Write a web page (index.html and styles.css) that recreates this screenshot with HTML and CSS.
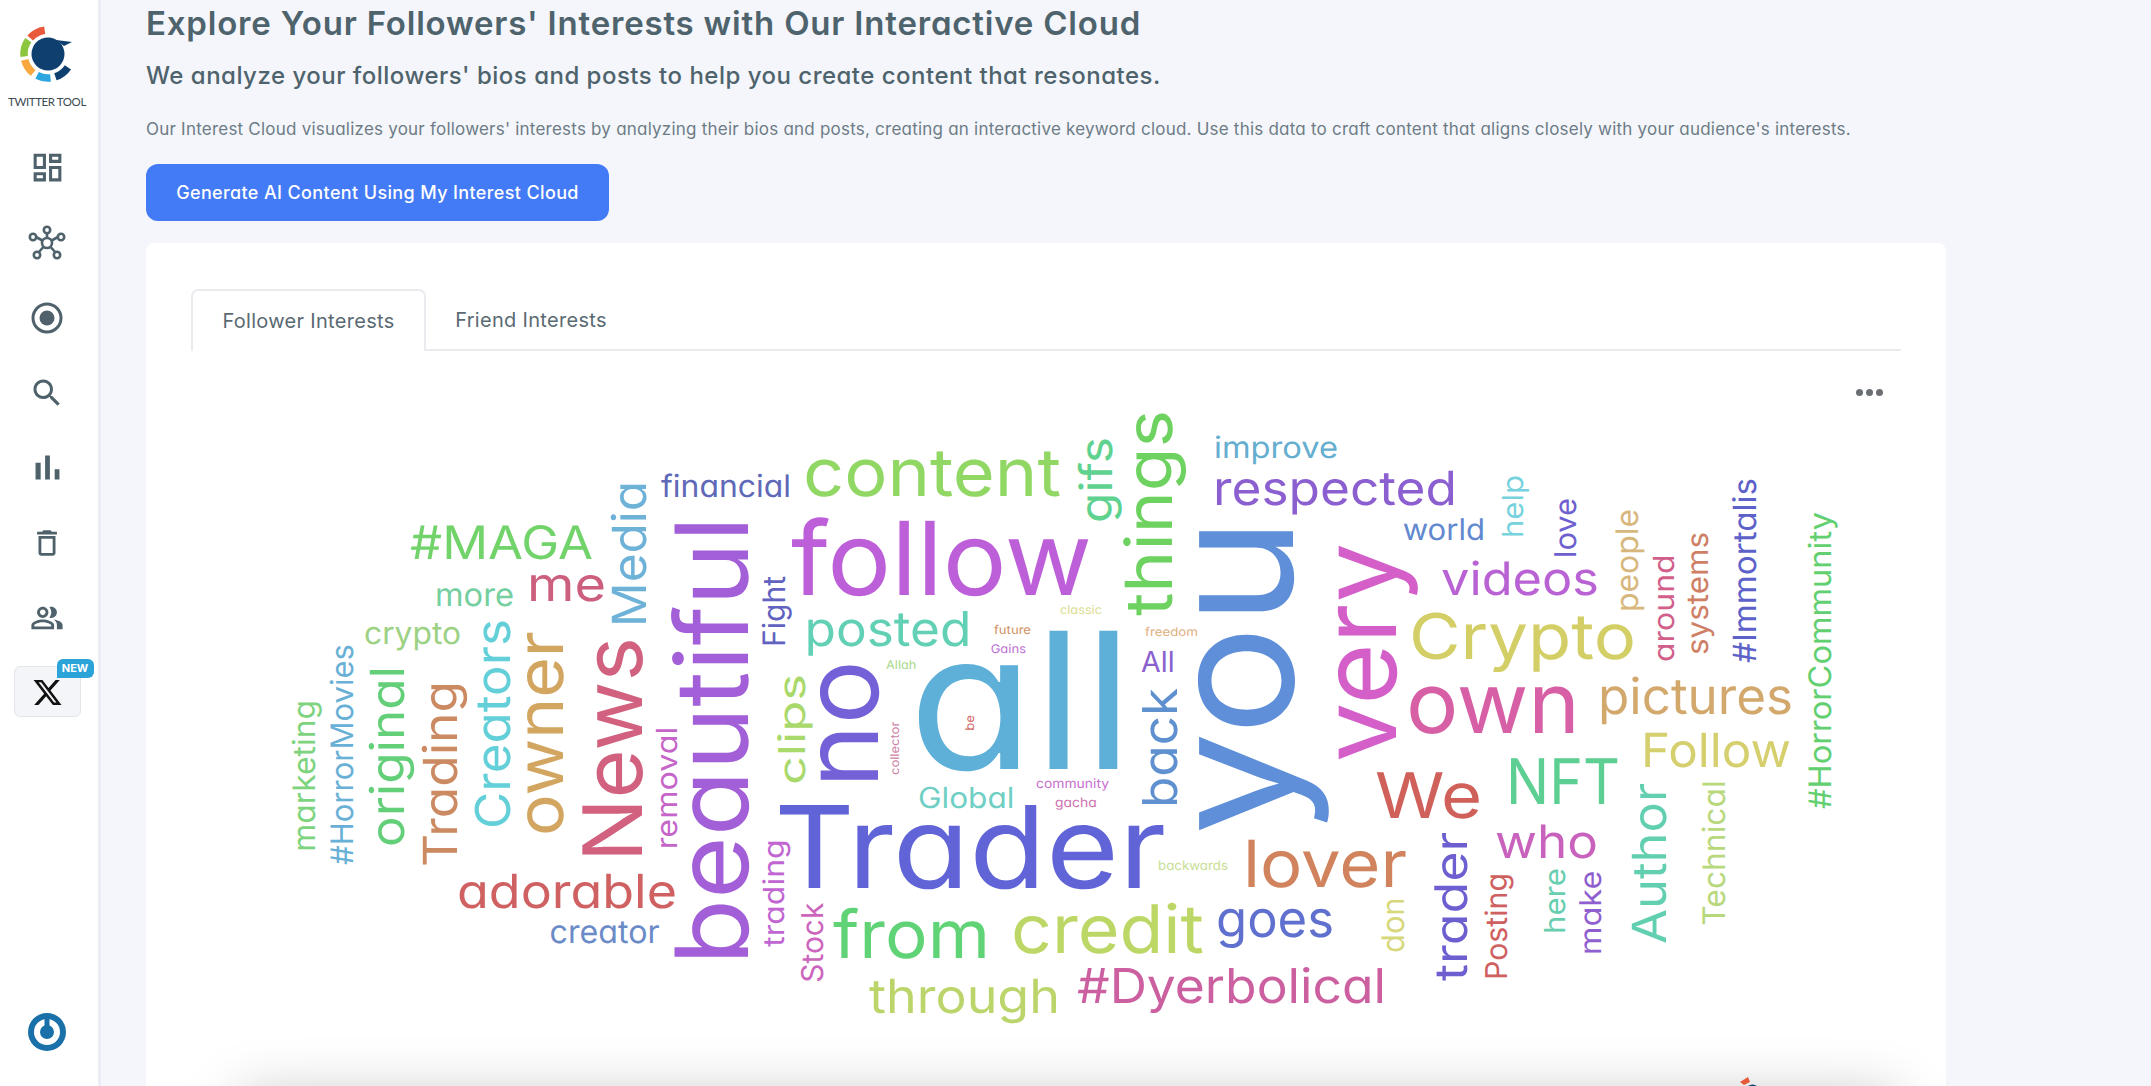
FILE: index.html
```html
<!DOCTYPE html>
<html lang="en">
<head>
<meta charset="utf-8">
<title>Interest Cloud</title>
<link rel="stylesheet" href="styles.css">
</head>
<body>
<div class="app">
  <aside class="sidebar">
    <div class="brand">
      <svg class="brand-mark" viewBox="0 0 68 68" width="68" height="68">
        <g fill="none" stroke-width="7.5">
          <path stroke="#e8583a" d="M16.2 17.9A24 24 0 0 1 30.7 10.2"/>
          <path stroke="#8cc63f" d="M10.1 36.5A24 24 0 0 1 14.3 20.2"/>
          <path stroke="#f9a83f" d="M19.2 52.9A24 24 0 0 1 10.7 39.8"/>
          <path stroke="#2aa5e0" d="M36.5 57.9A24 24 0 0 1 23.1 55.4"/>
          <path stroke="#0f3f6e" d="M53.9 47.4A24 24 0 0 1 41.4 56.8"/>
        </g>
        <path fill="#0f3f6e" d="M42 20l16 2-8 4z"/>
        <circle cx="34" cy="34" r="16.5" fill="#0f3f6e"/>
      </svg>
      <div class="brand-name">TWITTER TOOL</div>
    </div>
    <nav class="nav">
      <a class="nav-item"><svg viewBox="0 0 24 24" width="37" height="37"><path d="M19 5v2h-4V5h4M9 5v6H5V5h4m10 8v6h-4v-6h4M9 17v2H5v-2h4M21 3h-8v6h8V3zM11 3H3v10h8V3zm10 8h-8v10h8V11zm-10 4H3v6h8v-6z"/></svg></a>
      <a class="nav-item"><svg class="hub" viewBox="0 0 38 36" width="38" height="36"><g class="hub-lines"><path d="M19 18V8M19 18L8 12M19 18L30 12M19 18L10 28M19 18L28 28"/></g><circle cx="19" cy="18" r="5"/><circle cx="19" cy="5" r="3.2"/><circle cx="5" cy="12" r="3.2"/><circle cx="33" cy="12" r="3.2"/><circle cx="9" cy="30" r="3.2"/><circle cx="29" cy="30" r="3.2"/></svg></a>
      <a class="nav-item"><svg viewBox="0 0 32 32" width="32" height="32"><circle class="ring" cx="16" cy="16" r="14"/><circle cx="16" cy="16" r="7.5"/></svg></a>
      <a class="nav-item"><svg viewBox="0 0 24 24" width="36" height="36"><path d="M15.5 14h-.79l-.28-.27C15.41 12.59 16 11.11 16 9.5 16 5.91 13.09 3 9.5 3S3 5.91 3 9.5 5.91 16 9.5 16c1.61 0 3.09-.59 4.23-1.57l.27.28v.79l5 4.99L20.49 19l-4.99-5zm-6 0C7.01 14 5 11.99 5 9.5S7.01 5 9.5 5 14 7.01 14 9.5 11.99 14 9.5 14z"/></svg></a>
      <a class="nav-item"><svg viewBox="0 0 24 24" width="41" height="41"><path d="M5 9.2h3V19H5zM10.6 5h2.8v14h-2.8zm5.6 8H19v6h-2.8z"/></svg></a>
      <a class="nav-item"><svg viewBox="0 0 24 24" width="34" height="34"><path d="M6 19c0 1.1.9 2 2 2h8c1.1 0 2-.9 2-2V7H6v12zM8 9h8v10H8V9zm7.5-5l-1-1h-5l-1 1H5v2h14V4z"/></svg></a>
      <a class="nav-item"><svg viewBox="0 0 24 24" width="34" height="34"><path d="M16.67 13.13C18.04 14.06 19 15.32 19 17v3h4v-3c0-2.18-3.57-3.47-6.33-3.87zM15 12c2.21 0 4-1.79 4-4s-1.79-4-4-4c-.47 0-.91.1-1.33.24C14.5 5.27 15 6.58 15 8s-.5 2.73-1.33 3.76c.42.14.86.24 1.33.24zM9 12c2.21 0 4-1.79 4-4s-1.79-4-4-4-4 1.79-4 4 1.79 4 4 4zm0-6c1.1 0 2 .9 2 2s-.9 2-2 2-2-.9-2-2 .9-2 2-2zM9 13c-2.67 0-8 1.34-8 4v3h16v-3c0-2.66-5.33-4-8-4zm6 5H3v-.99C3.2 16.29 6.3 15 9 15s5.8 1.29 6 2v1z"/></svg></a>
      <a class="x-button">
        <svg viewBox="0 0 24 24" width="31" height="31"><path d="M18.244 2.25h3.308l-7.227 8.26 8.502 11.24H16.17l-5.214-6.817L4.99 21.75H1.68l7.73-8.835L1.254 2.25H8.08l4.713 6.231zm-1.161 17.52h1.833L7.084 4.126H5.117z"/></svg>
        <span class="badge">NEW</span>
      </a>
    </nav>
    <a class="power">
      <svg viewBox="0 0 38 38" width="38" height="38">
        <circle cx="19" cy="19" r="19" fill="#1a70a8"/>
        <circle cx="19" cy="19" r="10" fill="none" stroke="#fff" stroke-width="6"/>
        <path d="M19 6v13" stroke="#1a70a8" stroke-width="5" stroke-linecap="round" fill="none"/>
      </svg>
    </a>
  </aside>

  <main class="main">
    <h1 class="title">Explore Your Followers' Interests with Our Interactive Cloud</h1>
    <h2 class="subtitle">We analyze your followers' bios and posts to help you create content that resonates.</h2>
    <p class="intro">Our Interest Cloud visualizes your followers' interests by analyzing their bios and posts, creating an interactive keyword cloud. Use this data to craft content that aligns closely with your audience's interests.</p>
    <button class="cta">Generate AI Content Using My Interest Cloud</button>

    <section class="card">
      <div class="tabs">
        <button class="tab tab-active">Follower Interests</button>
        <button class="tab">Friend Interests</button>
      </div>
      <div class="chart">
        <div class="more-menu"><i></i><i></i><i></i></div>
        <svg class="cloud" viewBox="191 351 1710 700" width="1710" height="700">
          <text lengthAdjust="spacingAndGlyphs" x="908.5" y="769" font-size="190" textLength="224.5" fill="#5fb0d8">all</text>
          <text lengthAdjust="spacingAndGlyphs" x="791" y="595" font-size="102" textLength="301" fill="#bd5fd8">follow</text>
          <text lengthAdjust="spacingAndGlyphs" x="774" y="888" font-size="114" textLength="392" fill="#6064d6">Trader</text>
          <text lengthAdjust="spacingAndGlyphs" x="803" y="495.7" font-size="66" textLength="258" fill="#91d764">content</text>
          <text lengthAdjust="spacingAndGlyphs" x="804.5" y="646" font-size="48" textLength="167" fill="#62d0b4">posted</text>
          <text lengthAdjust="spacingAndGlyphs" x="661" y="497" font-size="31" textLength="130" fill="#6068b8">financial</text>
          <text lengthAdjust="spacingAndGlyphs" x="410" y="559" font-size="46" textLength="183" fill="#71d36a">#MAGA</text>
          <text lengthAdjust="spacingAndGlyphs" x="527" y="601" font-size="47" textLength="79" fill="#cc5f7e">me</text>
          <text lengthAdjust="spacingAndGlyphs" x="435" y="606" font-size="32" textLength="79" fill="#75cf9f">more</text>
          <text lengthAdjust="spacingAndGlyphs" x="364" y="644" font-size="31" textLength="97" fill="#9dd184">crypto</text>
          <text lengthAdjust="spacingAndGlyphs" x="457" y="908" font-size="47" textLength="220" fill="#cf6162">adorable</text>
          <text lengthAdjust="spacingAndGlyphs" x="549.6" y="942.7" font-size="32" textLength="110" fill="#6b8bc8">creator</text>
          <text lengthAdjust="spacingAndGlyphs" x="833" y="958.3" font-size="66" textLength="157" fill="#5fd375">from</text>
          <text lengthAdjust="spacingAndGlyphs" x="869" y="1012.7" font-size="47" textLength="191" fill="#bcd56a">through</text>
          <text lengthAdjust="spacingAndGlyphs" x="1011" y="953.3" font-size="67" textLength="193" fill="#bdd766">credit</text>
          <text lengthAdjust="spacingAndGlyphs" x="1216" y="936.7" font-size="51" textLength="118" fill="#6070cf">goes</text>
          <text lengthAdjust="spacingAndGlyphs" x="1077" y="1003" font-size="48" textLength="309" fill="#cc5fa0">#Dyerbolical</text>
          <text lengthAdjust="spacingAndGlyphs" x="1243" y="886.7" font-size="65" textLength="164" fill="#d0835c">lover</text>
          <text lengthAdjust="spacingAndGlyphs" x="1158" y="870" font-size="13" textLength="70" fill="#c7de96">backwards</text>
          <text lengthAdjust="spacingAndGlyphs" x="1441" y="595" font-size="46" textLength="158" fill="#b962d4">videos</text>
          <text lengthAdjust="spacingAndGlyphs" x="1495" y="857.7" font-size="46" textLength="103" fill="#c962bd">who</text>
          <text lengthAdjust="spacingAndGlyphs" x="1641" y="766.5" font-size="47" textLength="150" fill="#d5cf6e">Follow</text>
          <text lengthAdjust="spacingAndGlyphs" x="1598" y="714" font-size="50" textLength="195" fill="#d2a86c">pictures</text>
          <text lengthAdjust="spacingAndGlyphs" x="1506" y="804.4" font-size="63" textLength="114" fill="#5dcf92">NFT</text>
          <text lengthAdjust="spacingAndGlyphs" x="1406" y="732.7" font-size="84" textLength="174" fill="#d75fa5">own</text>
          <text lengthAdjust="spacingAndGlyphs" x="1409" y="658.6" font-size="63" textLength="227" fill="#d3cf66">Crypto</text>
          <text lengthAdjust="spacingAndGlyphs" x="1402.7" y="540" font-size="30" textLength="82.3" fill="#6288cf">world</text>
          <text lengthAdjust="spacingAndGlyphs" x="1214" y="458" font-size="30" textLength="124" fill="#65aed0">improve</text>
          <text lengthAdjust="spacingAndGlyphs" x="1213" y="505" font-size="47" textLength="244" fill="#8c5fd0">respected</text>
          <text lengthAdjust="spacingAndGlyphs" x="1141" y="671.7" font-size="29" textLength="33.6" fill="#8a60cf">All</text>
          <text lengthAdjust="spacingAndGlyphs" x="1375" y="818" font-size="63" textLength="107" fill="#d0605a">We</text>
          <text lengthAdjust="spacingAndGlyphs" x="918" y="808" font-size="29" textLength="96.4" fill="#6fcfc4">Global</text>
          <text lengthAdjust="spacingAndGlyphs" x="1036" y="788" font-size="13" textLength="73" fill="#c670cf">community</text>
          <text lengthAdjust="spacingAndGlyphs" x="1055" y="806.7" font-size="13" textLength="41.7" fill="#cf6fae">gacha</text>
          <text lengthAdjust="spacingAndGlyphs" x="1060" y="614" font-size="12" textLength="42" fill="#dcdc90">classic</text>
          <text lengthAdjust="spacingAndGlyphs" x="994" y="634" font-size="12" textLength="37" fill="#d09060">future</text>
          <text lengthAdjust="spacingAndGlyphs" x="990.7" y="652.7" font-size="12" textLength="35.3" fill="#bd70d0">Gains</text>
          <text lengthAdjust="spacingAndGlyphs" x="886" y="669" font-size="12" textLength="30.4" fill="#a8d88a">Allah</text>
          <text lengthAdjust="spacingAndGlyphs" x="1145" y="636" font-size="12" textLength="53" fill="#e0b080">freedom</text>

          <text lengthAdjust="spacingAndGlyphs" transform="rotate(-90 645.6 627)" x="645.6" y="627" font-size="47" textLength="146" fill="#6eb2d8">Media</text>
          <text lengthAdjust="spacingAndGlyphs" transform="rotate(-90 747.7 965)" x="747.7" y="965" font-size="101" textLength="449" fill="#a25fd8">beautiful</text>
          <text lengthAdjust="spacingAndGlyphs" transform="rotate(-90 785 647)" x="785" y="647" font-size="31" textLength="71" fill="#6262c0">Fight</text>
          <text lengthAdjust="spacingAndGlyphs" transform="rotate(-90 804.6 785)" x="804.6" y="785" font-size="37" textLength="111" fill="#a9d96a">clips</text>
          <text lengthAdjust="spacingAndGlyphs" transform="rotate(-90 877.7 788)" x="877.7" y="788" font-size="105" textLength="128" fill="#7461d8">no</text>
          <text lengthAdjust="spacingAndGlyphs" transform="rotate(-90 562.6 836)" x="562.6" y="836" font-size="65" textLength="205" fill="#d2a660">owner</text>
          <text lengthAdjust="spacingAndGlyphs" transform="rotate(-90 641.7 862)" x="641.7" y="862" font-size="82" textLength="225" fill="#d1617f">News</text>
          <text lengthAdjust="spacingAndGlyphs" transform="rotate(-90 510.4 829)" x="510.4" y="829" font-size="48" textLength="210" fill="#63cfd8">Creators</text>
          <text lengthAdjust="spacingAndGlyphs" transform="rotate(-90 456.6 867)" x="456.6" y="867" font-size="47" textLength="186" fill="#cc8a63">Trading</text>
          <text lengthAdjust="spacingAndGlyphs" transform="rotate(-90 404.4 847)" x="404.4" y="847" font-size="47" textLength="181" fill="#64cf79">original</text>
          <text lengthAdjust="spacingAndGlyphs" transform="rotate(-90 353 865)" x="353" y="865" font-size="31" textLength="221" fill="#69b0d6">#HorrorMovies</text>
          <text lengthAdjust="spacingAndGlyphs" transform="rotate(-90 315.5 851.7)" x="315.5" y="851.7" font-size="31" textLength="151.7" fill="#7dd37e">marketing</text>
          <text lengthAdjust="spacingAndGlyphs" transform="rotate(-90 677 849.3)" x="677" y="849.3" font-size="29" textLength="122.6" fill="#c565c9">removal</text>
          <text lengthAdjust="spacingAndGlyphs" transform="rotate(-90 784 946.7)" x="784" y="946.7" font-size="29" textLength="107.4" fill="#c065d2">trading</text>
          <text lengthAdjust="spacingAndGlyphs" transform="rotate(-90 822.8 982.7)" x="822.8" y="982.7" font-size="30" textLength="80" fill="#cc66bd">Stock</text>
          <text lengthAdjust="spacingAndGlyphs" transform="rotate(-90 1404 953)" x="1404" y="953" font-size="31" textLength="55.6" fill="#d7d77c">don</text>
          <text lengthAdjust="spacingAndGlyphs" transform="rotate(-90 1467 981)" x="1467" y="981" font-size="45" textLength="149" fill="#6d5fd0">trader</text>
          <text lengthAdjust="spacingAndGlyphs" transform="rotate(-90 1506.7 980)" x="1506.7" y="980" font-size="30" textLength="107" fill="#cf6060">Posting</text>
          <text lengthAdjust="spacingAndGlyphs" transform="rotate(-90 1523 538)" x="1523" y="538" font-size="29" textLength="63" fill="#76d2dc">help</text>
          <text lengthAdjust="spacingAndGlyphs" transform="rotate(-90 1576 558)" x="1576" y="558" font-size="30" textLength="60" fill="#6e60cf">love</text>
          <text lengthAdjust="spacingAndGlyphs" transform="rotate(-90 1638 612)" x="1638" y="612" font-size="31" textLength="103" fill="#d7b77c">people</text>
          <text lengthAdjust="spacingAndGlyphs" transform="rotate(-90 1674 662)" x="1674" y="662" font-size="29" textLength="107.6" fill="#d15f8a">around</text>
          <text lengthAdjust="spacingAndGlyphs" transform="rotate(-90 1708 655)" x="1708" y="655" font-size="30" textLength="123" fill="#ce7f65">systems</text>
          <text lengthAdjust="spacingAndGlyphs" transform="rotate(-90 1755.7 663)" x="1755.7" y="663" font-size="32" textLength="185" fill="#5d62c8">#Immortalis</text>
          <text lengthAdjust="spacingAndGlyphs" transform="rotate(-90 1830.7 809)" x="1830.7" y="809" font-size="31" textLength="297" fill="#62cf70">#HorrorCommunity</text>
          <text lengthAdjust="spacingAndGlyphs" transform="rotate(-90 1725 925.7)" x="1725" y="925.7" font-size="31" textLength="145.4" fill="#b8d87c">Technical</text>
          <text lengthAdjust="spacingAndGlyphs" transform="rotate(-90 1665.7 944)" x="1665.7" y="944" font-size="47" textLength="161" fill="#62d0b0">Author</text>
          <text lengthAdjust="spacingAndGlyphs" transform="rotate(-90 1601 955)" x="1601" y="955" font-size="30" textLength="84.4" fill="#8f5fcf">make</text>
          <text lengthAdjust="spacingAndGlyphs" transform="rotate(-90 1565 934)" x="1565" y="934" font-size="29" textLength="66" fill="#68ceb0">here</text>
          <text lengthAdjust="spacingAndGlyphs" transform="rotate(-90 1112 523)" x="1112" y="523" font-size="45" textLength="86" fill="#5fd290">gifs</text>
          <text lengthAdjust="spacingAndGlyphs" transform="rotate(-90 1171.8 616)" x="1171.8" y="616" font-size="65" textLength="206" fill="#6dd25f">things</text>
          <text lengthAdjust="spacingAndGlyphs" transform="rotate(-90 1293 835)" x="1293" y="835" font-size="172" textLength="318" fill="#5f8fd8">you</text>
          <text lengthAdjust="spacingAndGlyphs" transform="rotate(-90 1396 762)" x="1396" y="762" font-size="105" textLength="219" fill="#d45fc8">very</text>
          <text lengthAdjust="spacingAndGlyphs" transform="rotate(-90 1177 808)" x="1177" y="808" font-size="48" textLength="120" fill="#5f90cf">back</text>
          <text lengthAdjust="spacingAndGlyphs" transform="rotate(-90 898.6 775)" x="898.6" y="775" font-size="12" textLength="53.3" fill="#cf7fa5">collector</text>
          <text lengthAdjust="spacingAndGlyphs" transform="rotate(-90 974 730.7)" x="974" y="730.7" font-size="12" textLength="15.7" fill="#cf6565">be</text>
        </svg>
      </div>
      <div class="next-panel">
        <svg class="next-mark" viewBox="0 0 20 12" width="20" height="12"><path fill="#e8583a" d="M0 5L8 0l2 5-6 3z"/><path fill="#0f3f6e" d="M8 9c3-2 6-2 9 0v3H8z"/></svg>
      </div>
    </section>
  </main>
</div>
</body>
</html>
```
FILE: styles.css
```css
* { box-sizing: border-box; }
html, body { margin: 0; height: 100%; }
body {
  background: #f4f6fb;
  font-family: "Inter", "Noto Sans", sans-serif;
  font-feature-settings: "cv11";
  color: #4f626b;
  overflow: hidden;
}
.app { display: flex; height: 100vh; overflow: hidden; }

.sidebar {
  width: 101px;
  flex: none;
  background: #fff;
  border-right: 3px solid #ebedf4;
  padding-right: 4px;
  display: flex;
  flex-direction: column;
  align-items: center;
}
.brand { height: 130px; display: flex; flex-direction: column; align-items: center; padding-top: 20px; }
.brand-mark { display: block; margin-left: 2px; }
.brand-name {
  font-family: "Lato", sans-serif;
  font-size: 11.5px;
  line-height: 14px;
  letter-spacing: -0.4px;
  color: #3d4a52;
  margin-top: 7px;
  white-space: nowrap;
}
.nav { display: flex; flex-direction: column; align-items: center; }
.nav-item { height: 75px; width: 94px; display: flex; align-items: center; justify-content: center; }
.nav-item svg { fill: #4f626b; display: block; }
.nav-item .ring { fill: none; stroke: #4f626b; stroke-width: 3; }
.hub circle { fill: #fff; stroke: #4f626b; stroke-width: 2.6; }
.hub-lines path { fill: none; stroke: #4f626b; stroke-width: 2.6; }
.x-button {
  position: relative;
  width: 67px;
  height: 51px;
  margin-top: 11px;
  background: #f4f5f8;
  border: 1px solid #e3e5ea;
  border-radius: 6px;
  display: flex;
  align-items: center;
  justify-content: center;
}
.x-button svg { fill: #111; display: block; margin-top: 2px; }
.badge {
  position: absolute;
  top: -8px;
  right: -14px;
  width: 37px;
  height: 19px;
  background: #2aa3d8;
  border-radius: 6px 6px 6px 0;
  color: #fff;
  font-size: 11px;
  font-weight: 700;
  line-height: 19px;
  text-align: center;
}
.power { margin-top: auto; margin-bottom: 35px; display: block; height: 38px; }
.power svg { display: block; }

.main { flex: 1; min-width: 0; padding: 1px 0 0 45px; }
.title {
  margin: 0;
  font-size: 33px;
  line-height: 44px;
  font-weight: 600;
  letter-spacing: 0.8px;
  color: #4e636c;
  white-space: nowrap;
}
.subtitle {
  margin: 14px 0 0;
  font-size: 24px;
  line-height: 34px;
  font-weight: 500;
  letter-spacing: 0.49px;
  color: #4e636c;
  white-space: nowrap;
}
.intro {
  margin: 24px 0 0;
  font-size: 17px;
  line-height: 24px;
  letter-spacing: 0.22px;
  color: #6d7c86;
  white-space: nowrap;
}
.cta {
  display: block;
  margin: 23px 0 0;
  width: 463px;
  height: 57px;
  background: #437af5;
  border: 0;
  border-radius: 12px;
  color: #fff;
  font: 500 18px/24px "Inter", sans-serif;
  font-feature-settings: "cv11";
  letter-spacing: 0.37px;
  padding: 0;
}
.card {
  margin-top: 22px;
  width: 1800px;
  height: 1000px;
  background: #fff;
  border-radius: 8px;
  padding: 46px 45px 0;
}
.tabs { display: flex; border-bottom: 2px solid #e9ebef; height: 62px; }
.tab {
  font: 400 20px/26px "Inter", sans-serif;
  font-feature-settings: "cv11";
  letter-spacing: 0.3px;
  color: #5a6a73;
  background: none;
  border: 0;
  padding: 0;
  height: 62px;
  width: 210px;
}
.tab-active {
  width: 235px;
  background: #fff;
  border: 2px solid #e9ebef;
  border-bottom: 0;
  border-radius: 7px 7px 0 0;
}
.chart { position: relative; width: 1710px; height: 700px; }
.cloud { display: block; text-rendering: geometricPrecision; }
.cloud text { font-family: "Inter", sans-serif; font-weight: 400; font-feature-settings: "cv11"; }
.more-menu { position: absolute; top: 38px; right: 18px; display: flex; gap: 3px; }
.more-menu i { display: block; width: 7px; height: 7px; border-radius: 50%; background: #6b6f74; }
.next-panel {
  position: relative;
  margin: 49px 0 0 49px;
  width: 1657px;
  height: 100px;
  box-shadow: 0 0 60px rgba(0, 0, 0, 0.28);
}
.next-mark { position: absolute; top: -23px; left: 1500px; display: block; }
```
